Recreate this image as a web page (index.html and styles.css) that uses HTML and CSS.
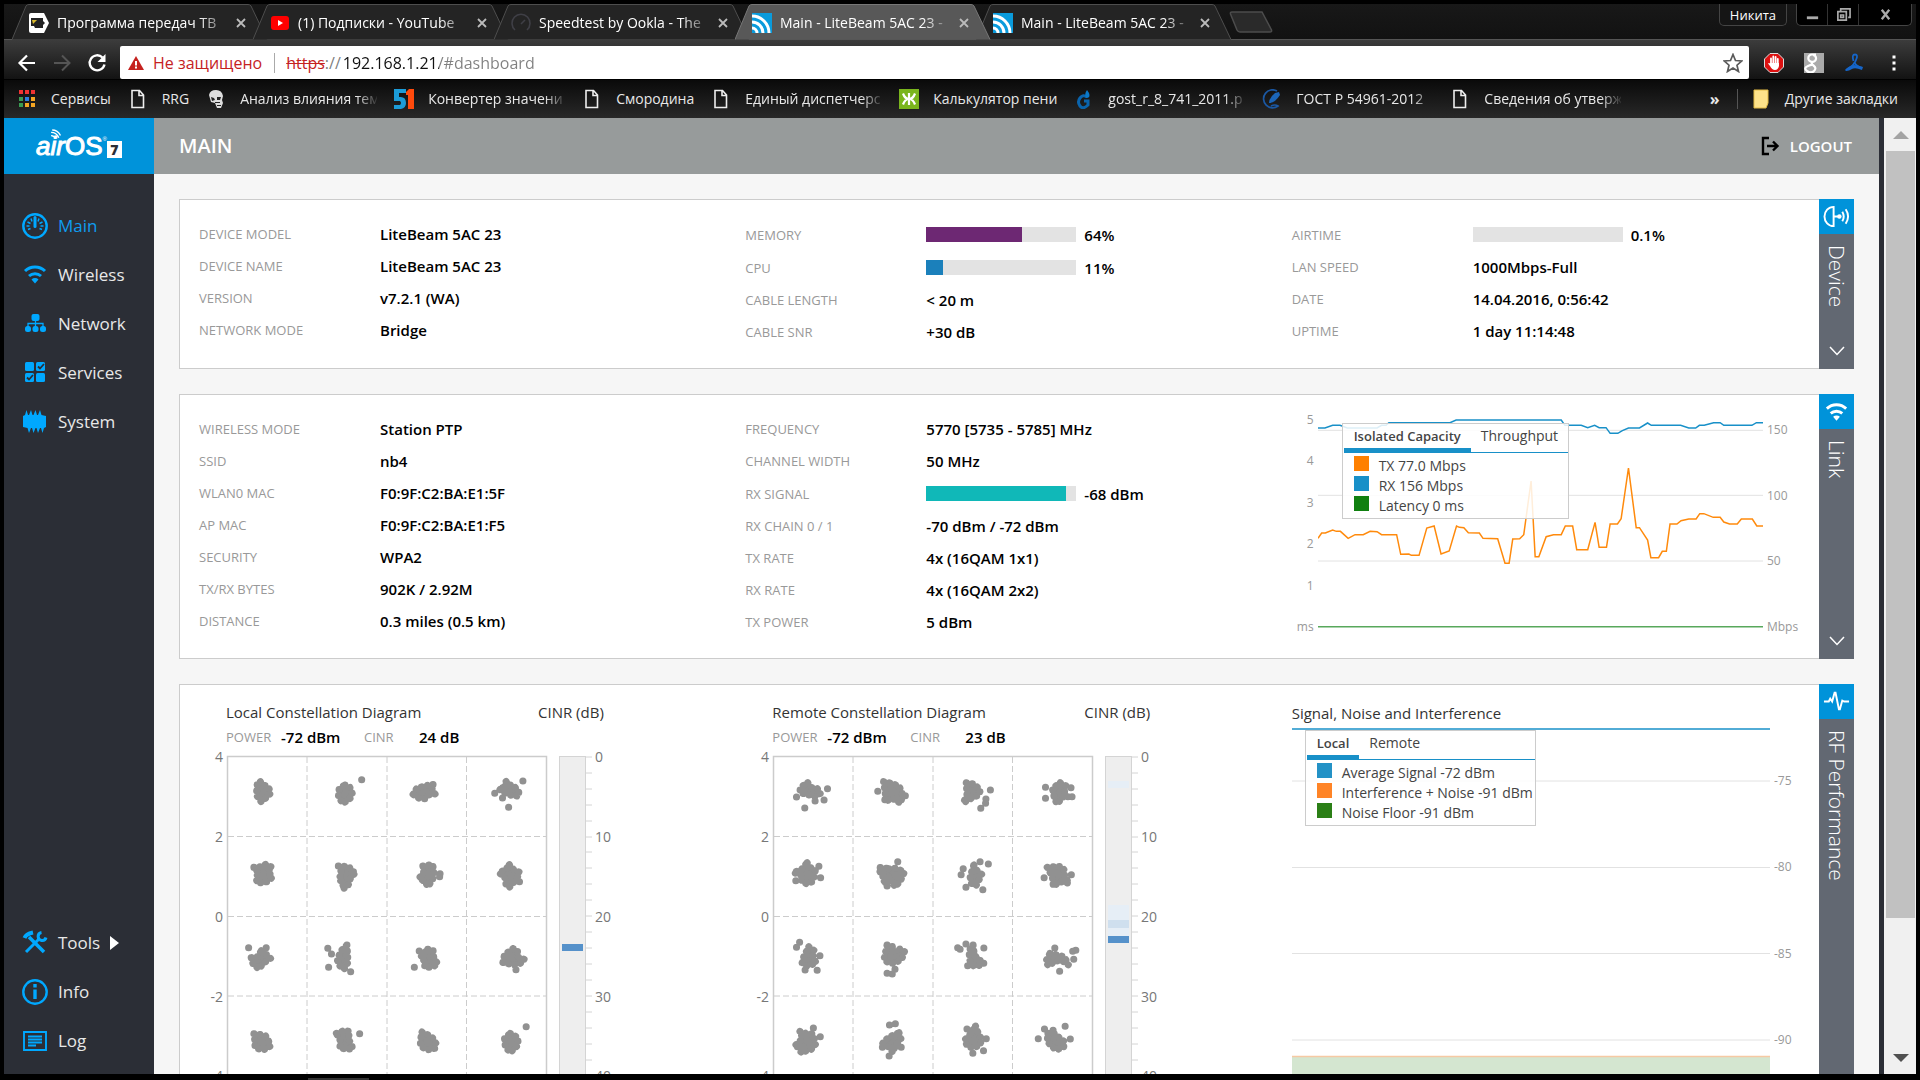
FILE: index.html
```html
<!DOCTYPE html>
<html lang="en">
<head>
<meta charset="utf-8">
<title>Main - LiteBeam 5AC 23</title>
<link rel="stylesheet" href="styles.css">
</head>
<body>
<svg class="defs" aria-hidden="true">
  <symbol id="tab-shape" viewBox="0 0 256 36" preserveAspectRatio="none"><path d="M0 35.500L14 2Q15 .5 17 .5H236Q238 .5 239 2L255 35.500" vector-effect="non-scaling-stroke"/></symbol>
  <symbol id="doc" viewBox="0 0 20 20"><path d="M4 1.500h7.500l4 4.500v12.500H4zM11 1.500v5h5" fill="none" stroke="#eee" stroke-width="1.600"/></symbol>
  <symbol id="rss" viewBox="0 0 20 20"><path fill="#0a9bdc" d="M0 0h20v20H0z"/><path d="M0 15a5 5 0 0 1 5 5M0 9a11 11 0 0 1 11 11M0 3a17 17 0 0 1 17 17" fill="none" stroke="#fff" stroke-width="3"/></symbol>
  <symbol id="close" viewBox="0 0 10 10"><path d="M1 1l8 8M9 1L1 9" stroke="#bbb" stroke-width="1.800"/></symbol>
  <symbol id="wifi" viewBox="0 0 24 20"><path d="M2 7a14.500 14.500 0 0 1 20 0M6 12a9 9 0 0 1 12 0" fill="none" stroke="currentColor" stroke-width="3"/><path fill="currentColor" d="M8.500 15.500a5 5 0 0 1 7 0L12 19.500z"/></symbol>
  <symbol id="chevron" viewBox="0 0 16 10"><path d="M1 1l7 7.500L15 1" fill="none" stroke="#fff" stroke-width="1.500"/></symbol>
</svg>

<header class="browser">
  <div class="tabstrip">
    <div class="tab">
      <svg class="tab-bg"><use href="#tab-shape"/></svg>
      <svg class="fav" viewBox="0 0 20 20"><path fill="#fff" d="M2 0h13l5 10-5 10H2Q0 20 0 18V2Q0 0 2 0z"/><path fill="#222" d="M2 5h12v3l2 2-2 2v3H6l-1-2H2z"/><path fill="#d9b92c" d="M3 7h5l-4 4z"/></svg>
      <a class="tab-title" href="#">Программа передач ТВ</a>
      <button class="tab-close" aria-label="Close"><svg><use href="#close"/></svg></button>
    </div>
    <div class="tab">
      <svg class="tab-bg"><use href="#tab-shape"/></svg>
      <svg class="fav" viewBox="0 0 20 20"><rect x="1" y="3" width="18" height="14" rx="3" fill="#f00"/><path fill="#fff" d="M8 7l5 3-5 3z"/></svg>
      <a class="tab-title" href="#">(1) Подписки - YouTube</a>
      <button class="tab-close" aria-label="Close"><svg><use href="#close"/></svg></button>
    </div>
    <div class="tab">
      <svg class="tab-bg"><use href="#tab-shape"/></svg>
      <svg class="fav" viewBox="0 0 20 20"><path d="M4 17a9 9 0 1 1 12 0M10 11l4-4" fill="none" stroke="#3f3f46" stroke-width="1.600"/></svg>
      <a class="tab-title" href="#">Speedtest by Ookla - The</a>
      <button class="tab-close" aria-label="Close"><svg><use href="#close"/></svg></button>
    </div>
    <div class="tab tab-active">
      <svg class="tab-bg"><use href="#tab-shape"/></svg>
      <svg class="fav"><use href="#rss"/></svg>
      <a class="tab-title" href="#">Main - LiteBeam 5AC 23 -</a>
      <button class="tab-close" aria-label="Close"><svg><use href="#close"/></svg></button>
    </div>
    <div class="tab">
      <svg class="tab-bg"><use href="#tab-shape"/></svg>
      <svg class="fav"><use href="#rss"/></svg>
      <a class="tab-title" href="#">Main - LiteBeam 5AC 23 -</a>
      <button class="tab-close" aria-label="Close"><svg><use href="#close"/></svg></button>
    </div>
    <button class="new-tab" aria-label="New tab"><svg viewBox="0 0 44 22"><path d="M1.500 3Q1 1 3 1H33L42.500 19Q43 21 41 21H11Q9 21 8 19z" fill="#2a2a2a" stroke="#4c4c4c" stroke-width="1.500"/></svg></button>
    <div class="window-controls">
      <button class="profile">Никита</button>
      <div class="win-group">
        <button aria-label="Minimize"><svg viewBox="0 0 16 16"><path d="M2 10h12v3H2z" fill="#aaa"/></svg></button>
        <button aria-label="Restore"><svg viewBox="0 0 16 16"><path d="M5 4V2h10v9h-2M2 5h9v9H2zM5 8.500h3v2.500H5z" fill="none" stroke="#aaa" stroke-width="1.800"/></svg></button>
        <button class="win-close" aria-label="Close window"><svg viewBox="0 0 16 16"><path d="M4 3l8 10M12 3L4 13" stroke="#aaa" stroke-width="2.500"/></svg></button>
      </div>
    </div>
  </div>

  <div class="toolbar">
    <button class="tool" aria-label="Back"><svg viewBox="0 0 20 20"><path d="M18 10H3M10 2.500L2.500 10l7.500 7.500" fill="none" stroke="#fff" stroke-width="2.200"/></svg></button>
    <button class="tool" aria-label="Forward"><svg viewBox="0 0 20 20"><path d="M2 10h15M10 2.500l7.500 7.500-7.500 7.500" fill="none" stroke="#555" stroke-width="2"/></svg></button>
    <button class="tool" aria-label="Reload"><svg viewBox="0 0 20 20"><path d="M15.500 4.500a7.500 7.500 0 1 0 2 7" fill="none" stroke="#fff" stroke-width="2.400"/><path d="M18.500 1v8h-8z" fill="#fff"/></svg></button>
    <form class="omnibox">
      <svg class="warn" viewBox="0 0 16 14"><path fill="#c5221f" d="M8 0l8 14H0z"/><path fill="#fff" d="M7 5h2v4.500H7zM7 10.500h2v2H7z"/></svg>
      <span class="insecure">Не защищено</span>
      <span class="scheme"><s>https</s>://</span>
      <input class="url" type="text" aria-label="Address" value="192.168.1.21/#dashboard">
      <svg class="star" viewBox="0 0 20 20"><path d="M10 1.500l2.500 6 6.300.5-4.800 4.200 1.500 6.300-5.500-3.400-5.500 3.400L6 12.200 1.200 8l6.300-.5z" fill="none" stroke="#5a5a5a" stroke-width="1.700"/></svg>
    </form>
    <button class="tool" aria-label="Ad blocker"><svg viewBox="0 0 20 20"><path fill="#d11" stroke="#ddd" d="M6 .5h8L19.500 6v8L14 19.500H6L.5 14V6z"/><path d="M7 11V5.500M9.300 10V3.500M11.600 10V4M13.800 11V6" stroke="#fff" stroke-width="1.800" stroke-linecap="round"/><path fill="#fff" d="M6 10h9v3q-1 4-4 4t-5-4L4 10.500q1-1 2 0z"/></svg></button>
    <button class="tool" aria-label="Google"><svg viewBox="0 0 20 20"><path fill="#aaa" d="M0 0h20v20H0z"/><path d="M12 1.500H8a3.700 3.700 0 1 0 0 7.400 3.500 3.500 0 0 0 1-7M8 9q-1 2 1.500 3.500Q13 15 10 18t-7 0 1-5 5-.5" fill="none" stroke="#fff" stroke-width="2.200"/></svg></button>
    <button class="tool" aria-label="PDF"><svg viewBox="0 0 20 20"><path d="M9.500 8Q7.500 1.500 11 1.500T12 7Q10 13 2 17M10 9q3 5 8 6" fill="none" stroke="#1565c8" stroke-width="1.800"/><path fill="#1565c8" d="M1 17q5-5 9-5t9 2l-1 3q-7-3-10-1t-6 2z"/></svg></button>
    <button class="tool" aria-label="Menu"><svg viewBox="0 0 20 20"><path d="M8.500 2.500h3v3h-3zM8.500 8.500h3v3h-3zM8.500 14.500h3v3h-3z" fill="#fff"/></svg></button>
  </div>

  <nav class="bookmarks" aria-label="Bookmarks">
    <a href="#"><svg viewBox="0 0 20 20"><path fill="#e33" d="M2 1h4v4H2zM8 1h4v4H8zM14 1h4v4h-4z"/><path fill="#3a9c52" d="M2 8h4v4H2zM2 14h4v4H2z"/><path fill="#2a7de1" d="M8 8h4v4H8z"/><path fill="#f5a623" d="M14 8h4v4h-4zM8 14h4v4H8zM14 14h4v4h-4z"/></svg><span>Сервисы</span></a>
    <a href="#"><svg><use href="#doc"/></svg><span>RRG</span></a>
    <a href="#"><svg viewBox="0 0 20 20"><path fill="#ddd" d="M3 6Q4 1 10 1t7 6l-1 4 1 3-2 5h-4l-2-5-4-1z"/><path fill="#222" d="M5 8l3 1 1 2-3 1zM11 8l4 0-1 3h-3zM9 13h5v1H9zM11 16h4v1h-4z"/></svg><span class="cut">Анализ влияния тем</span></a>
    <a href="#"><svg viewBox="0 0 20 20"><path fill="#1c9cd8" d="M0 0h12v4H5v4q7-1 7 6 0 5-5 6H0v-4h6q2-2 0-4H0z"/><path fill="#ff4a0c" d="M12 3l3-3h5v20h-6V6h-2z"/></svg><span class="cut">Конвертер значени</span></a>
    <a href="#"><svg><use href="#doc"/></svg><span>Смородина</span></a>
    <a href="#"><svg><use href="#doc"/></svg><span class="cut">Единый диспетчерс</span></a>
    <a href="#"><svg viewBox="0 0 20 20"><path fill="#7ab51d" d="M0 0h20v20H0z"/><path d="M10 4v12M4 4.500q2 5.500 6 5.500t6-5.500M4 15.500Q6 10 10 10t6 5.500" fill="none" stroke="#fff" stroke-width="2.200"/></svg><span>Калькулятор пени</span></a>
    <a href="#"><svg viewBox="0 0 20 20"><path d="M13 8q-4-3-7 1t0 8 8-1v-4h-4" fill="none" stroke="#0a64ad" stroke-width="3"/><path fill="#0a78c8" d="M13 1q-3 4-1 8 5 0 3-5z"/></svg><span class="cut">gost_r_8_741_2011.p</span></a>
    <a href="#"><svg viewBox="0 0 20 20"><path d="M15 2A9 9 0 1 0 16 17q-3-2-7 0" fill="none" stroke="#1b58a3" stroke-width="1.700"/><path fill="#1b65b8" d="M7 14q0-5 6-10l4-1 1 3q-5 8-11 8z"/></svg><span class="cut">ГОСТ Р 54961-2012</span></a>
    <a href="#"><svg><use href="#doc"/></svg><span class="cut">Сведения об утверж</span></a>
    <button class="more">»</button>
    <a class="other" href="#"><svg viewBox="0 0 20 20"><path fill="#fde28a" stroke="#e3bb45" d="M3 1h14v13l-2 5H3z"/></svg><span>Другие закладки</span></a>
  </nav>
</header>

<div class="app">
  <aside class="sidebar">
    <a class="logo" href="#"><svg class="waves" viewBox="0 0 10 9"><path d="M1 6q3 0 4 3M1 3q5 0 7 5M2 .8q5 0 7.500 5" fill="none" stroke="#fff" stroke-width="1.300"/></svg><i>air</i><span>OS</span><sup>®</sup><b>7</b></a>
    <nav class="menu">
      <a class="current" href="#"><svg viewBox="0 0 26 26"><circle cx="13" cy="13" r="11.700" fill="none" stroke="currentColor" stroke-width="2.400"/><path d="M13 4.500v9" stroke="currentColor" stroke-width="3" stroke-linecap="round"/><path d="M9 5.500l1 3M17 5.500l-1 3M5.500 9l3 1.500M20.500 9l-3 1.500M4.500 13h3M21.500 13h-3M6 16.500l2.500-1M20 16.500l-2.500-1" stroke="currentColor" stroke-width="1.500"/></svg>Main</a>
      <a href="#"><svg viewBox="0 0 26 26"><use href="#wifi" x="1" y="2" width="24" height="20"/></svg>Wireless</a>
      <a href="#"><svg viewBox="0 0 26 26"><g fill="currentColor"><rect x="9.500" y="3" width="8" height="7" rx="2"/><rect x="3" y="15" width="6" height="6" rx="2.500"/><rect x="10.500" y="15" width="6" height="6" rx="2.500"/><rect x="18" y="15" width="6" height="6" rx="2.500"/></g><path d="M13.500 9v8M6 17v-4.500h15V17" fill="none" stroke="currentColor" stroke-width="1.300"/></svg>Network</a>
      <a href="#"><svg viewBox="0 0 26 26"><g fill="currentColor"><rect x="3" y="2" width="9" height="9" rx="1.500"/><rect x="14" y="2" width="9" height="9" rx="1.500"/><rect x="3" y="13" width="9" height="9" rx="1.500"/><rect x="14" y="13" width="9" height="9" rx="1.500"/></g><path d="M16 6.500l2 2 4-4.500M5 17.500l2 2 4-4.500" fill="none" stroke="#2b2e36" stroke-width="1.800"/></svg>Services</a>
      <a href="#"><svg viewBox="0 0 26 26"><path fill="currentColor" d="M1 7l2-1 1.500-5L6 6h1l2-5 1.500 5h1l2-5 1.500 5h1l2-5 1.500 5L24 7v11l-2 1-1.500 5-1.500-5h-1l-2 5-1.500-5h-1l-2 5-1.500-5h-1l-2 5-1.500-5L1 18z"/></svg>System</a>
    </nav>
    <nav class="menu menu-bottom">
      <a href="#"><svg viewBox="0 0 26 26"><path d="M7 7l15 15" stroke="currentColor" stroke-width="3.500"/><path d="M2.500 8Q4 4 11 2.500" fill="none" stroke="currentColor" stroke-width="4"/><path d="M4 22L17 9" stroke="currentColor" stroke-width="3"/><path d="M19.500 2.500a4 4 0 1 0 4.500 5" fill="none" stroke="currentColor" stroke-width="3"/></svg>Tools<span class="caret"></span></a>
      <a href="#"><svg viewBox="0 0 26 26"><circle cx="13" cy="13" r="11.700" fill="none" stroke="currentColor" stroke-width="2.400"/><path fill="currentColor" d="M11.300 5h3.400v3.500h-3.400zM11.300 10.500h3.400V20h-3.400z"/></svg>Info</a>
      <a href="#"><svg viewBox="0 0 26 26"><path d="M2 4h22v18H2zM6 8.500h14M6 11.500h14M6 14.500h14M6 17.500h8" fill="none" stroke="currentColor" stroke-width="1.900"/></svg>Log</a>
    </nav>
  </aside>

  <div class="page">
    <header class="page-head">
      <h1>MAIN</h1>
      <button class="logout"><svg viewBox="0 0 20 20"><path d="M9 2H3v16h6M7 10h10M13 5.500l4.500 4.500-4.500 4.500" fill="none" stroke="#000" stroke-width="2.400"/></svg>LOGOUT</button>
    </header>

    <main class="content">
      <section class="panel">
        <div class="cols">
          <dl>
            <div><dt>DEVICE MODEL</dt><dd>LiteBeam 5AC 23</dd></div>
            <div><dt>DEVICE NAME</dt><dd>LiteBeam 5AC 23</dd></div>
            <div><dt>VERSION</dt><dd>v7.2.1 (WA)</dd></div>
            <div><dt>NETWORK MODE</dt><dd>Bridge</dd></div>
          </dl>
          <dl>
            <div class="has-bar"><dt>MEMORY</dt><dd><span class="bar"><span class="fill memory" style="width:64%"></span></span>64%</dd></div>
            <div class="has-bar"><dt>CPU</dt><dd><span class="bar"><span class="fill cpu" style="width:11%"></span></span>11%</dd></div>
            <div><dt>CABLE LENGTH</dt><dd>&lt; 20 m</dd></div>
            <div><dt>CABLE SNR</dt><dd>+30 dB</dd></div>
          </dl>
          <dl>
            <div class="has-bar"><dt>AIRTIME</dt><dd><span class="bar"></span>0.1%</dd></div>
            <div><dt>LAN SPEED</dt><dd>1000Mbps-Full</dd></div>
            <div><dt>DATE</dt><dd>14.04.2016, 0:56:42</dd></div>
            <div><dt>UPTIME</dt><dd>1 day 11:14:48</dd></div>
          </dl>
        </div>
        <button class="side"><span class="side-icon"><svg viewBox="0 0 28 28"><path d="M11 4A9 9.500 0 0 0 11 24zM11 14h6" fill="none" stroke="#fff" stroke-width="2"/><circle cx="17" cy="14" r="2.300" fill="#fff"/><path d="M20 9q3 5 0 10M23.500 6.500q5 7.500 0 15" fill="none" stroke="#fff" stroke-width="2"/></svg></span><span class="side-name">Device</span><svg class="chev"><use href="#chevron"/></svg></button>
      </section>

      <section class="panel">
        <div class="cols">
          <dl>
            <div><dt>WIRELESS MODE</dt><dd>Station PTP</dd></div>
            <div><dt>SSID</dt><dd>nb4</dd></div>
            <div><dt>WLAN0 MAC</dt><dd>F0:9F:C2:BA:E1:5F</dd></div>
            <div><dt>AP MAC</dt><dd>F0:9F:C2:BA:E1:F5</dd></div>
            <div><dt>SECURITY</dt><dd>WPA2</dd></div>
            <div><dt>TX/RX BYTES</dt><dd>902K / 2.92M</dd></div>
            <div><dt>DISTANCE</dt><dd>0.3 miles (0.5 km)</dd></div>
          </dl>
          <dl>
            <div><dt>FREQUENCY</dt><dd>5770 [5735 - 5785] MHz</dd></div>
            <div><dt>CHANNEL WIDTH</dt><dd>50 MHz</dd></div>
            <div class="has-bar"><dt>RX SIGNAL</dt><dd><span class="bar"><span class="fill signal" style="width:93%"></span></span>-68 dBm</dd></div>
            <div><dt>RX CHAIN 0 / 1</dt><dd>-70 dBm / -72 dBm</dd></div>
            <div><dt>TX RATE</dt><dd>4x (16QAM 1x1)</dd></div>
            <div><dt>RX RATE</dt><dd>4x (16QAM 2x2)</dd></div>
            <div><dt>TX POWER</dt><dd>5 dBm</dd></div>
          </dl>
          <div class="link-chart">
            <div class="axis axis-ms"><span>5</span><span>4</span><span>3</span><span>2</span><span>1</span><span>ms</span></div>
            <svg viewBox="91 645 1093 720" preserveAspectRatio="none">
              <g class="grid"><path d="M91 751H1184M91 946H1184M91 1143H1184"/></g>
              <path class="line latency" d="M91 1340H1184"/>
              <path class="line rx" d="M91 744 108 744 127 736 145 736 163 744 236 744 247 736 258 736 265 728 415 728 430 720 688 720 697 736 737 736 753 743 770 736 781 743 798 743 808 760 827 760 838 752 853 744 880 744 900 729 909 736 981 736 1001 744 1018 744 1027 736 1039 736 1062 728 1078 728 1087 736 1156 736 1167 728 1184 728"/>
              <path class="line tx" d="M91 1075 100 1059 109 1059 127 1050 136 1054 146 1054 165 1075 182 1064 202 1064 219 1054 236 1055 247 1064 284 1064 294 1123 314 1122 320 1126 339 1126 358 1044 376 1038 393 1122 413 1113 431 1038 438 1042 449 1043 460 1058 487 1059 496 1075 532 1076 550 1150 560 1150 569 1077 586 1076 596 1064 614 903 624 1130 633 1130 651 1070 669 1064 688 1064 698 1038 716 1038 726 1109 753 1109 771 1027 781 1102 799 1102 808 1032 826 1032 835 1016 853 864 872 1043 880 1043 900 1080 908 1133 927 1133 936 1114 946 1114 955 1032 972 1032 982 1022 1001 1017 1019 1017 1028 1001 1038 1001 1061 1012 1078 1012 1087 1026 1101 1032 1120 1032 1130 1017 1157 1017 1168 1038 1184 1038"/>
            </svg>
            <div class="axis axis-mbps"><span>150</span><span>100</span><span>50</span><span>Mbps</span></div>
            <div class="legend legend-link">
              <div class="legend-tabs"><button class="on">Isolated Capacity</button><button>Throughput</button></div>
              <ul><li><i class="sw-tx"></i>TX 77.0 Mbps</li><li><i class="sw-rx"></i>RX 156 Mbps</li><li><i class="sw-lat"></i>Latency 0 ms</li></ul>
            </div>
          </div>
        </div>
        <button class="side"><span class="side-icon"><svg viewBox="0 0 28 28"><use href="#wifi" x="2" y="4" width="24" height="20"/></svg></span><span class="side-name">Link</span><svg class="chev"><use href="#chevron"/></svg></button>
      </section>

      <section class="panel panel-rf">
        <div class="cols">
          <div class="constellation">
            <div class="c-head"><h2>Local Constellation Diagram</h2><h2>CINR (dB)</h2></div>
            <div class="c-stats"><span>POWER</span><b>-72 dBm</b><span>CINR</span><b>24 dB</b></div>
            <svg class="plot" viewBox="0 0 430 340">
              <g class="frame"><path d="M27.500 8.500H346.500V328H27.500z"/><path class="dash" d="M107 9V328M187 9V328M266.500 9V328M28 88.500H346M28 168.500H346M28 248H346"/></g>
              <rect class="gauge" x="359.500" y="8.500" width="26" height="340"/>
              <path class="ticks" d="M386 9h6M386 25h6M386 41h6M386 57h6M386 73h6M386 89h6M386 104h6M386 120h6M386 136h6M386 152h6M386 168h6M386 184h6M386 200h6M386 216h6M386 232h6M386 248h6M386 264h6M386 280h6M386 296h6M386 312h6M386 328h6"/>
              <rect class="mark" x="362" y="196" width="21" height="7"/>
              <g class="axis-l"><text x="23" y="14">4</text><text x="23" y="94">2</text><text x="23" y="174">0</text><text x="23" y="254">-2</text><text x="23" y="333">-4</text></g>
              <g class="axis-r"><text x="395" y="14">0</text><text x="395" y="94">10</text><text x="395" y="174">20</text><text x="395" y="254">30</text><text x="395" y="333">40</text></g>
              <g class="points" transform="translate(-200 -68) scale(.40816 .33333)">
                <path d="M638 305 646 316 656 318 664 338 655 350 640 366 628 345 630 314zM845 315 856 318 863 340 861 352 840 371 829 350 831 325zM886 299h1M1012 343 1022 323 1045 318 1050 313 1064 314 1058 325 1066 342 1050 345 1042 356 1028 356zM1240 304 1246 315 1257 315 1271 335 1271 349 1252 346 1238 340 1222 326 1240 320zM1281 303h1M1212 340h1M1231 354h1M1246 382h1"/>
                <path d="M622 562 640 560 652 552 668 563 655 572 668 591 655 605 630 610 627 590 635 580zM829 558 856 560 860 574 873 577 860 590 852 620 838 627 842 608 829 598 838 580zM1036 558 1060 553 1063 575 1060 600 1048 620 1042 605 1026 595 1038 580zM1078 581h1M1077 590h1M1248 554 1258 568 1274 577 1268 590 1274 605 1260 605 1248 622 1240 618 1238 595 1222 577 1238 570z"/>
                <path d="M609 803h1M652 803h1M640 812 655 825 663 835 645 850 634 867 620 852 615 833 632 830zM803 805h1M812 822h1M805 862h1M859 875h1M850 795 852 830 852 848 843 868 830 855 826 838 836 812zM1027 813h1M1015 862h1M1048 808 1061 810 1063 835 1073 852 1058 862 1040 862 1042 845 1030 832zM1257 806 1268 810 1268 830 1285 838 1275 850 1258 855 1232 848 1236 824zM1264 869h1"/>
                <path d="M622 1061 650 1066 657 1080 663 1098 645 1110 625 1104 624 1080zM824 1060 842 1052 857 1054 853 1078 861 1090 864 1108 832 1105 835 1085zM881 1061h1M1034 1056 1058 1070 1069 1092 1066 1105 1046 1110 1030 1098 1030 1080zM1250 1060 1268 1072 1270 1094 1250 1118 1238 1100 1236 1075zM1289 1040h1"/>
              </g>
            </svg>
          </div>

          <div class="constellation">
            <div class="c-head"><h2>Remote Constellation Diagram</h2><h2>CINR (dB)</h2></div>
            <div class="c-stats"><span>POWER</span><b>-72 dBm</b><span>CINR</span><b>23 dB</b></div>
            <svg class="plot" viewBox="0 0 430 340">
              <g class="frame"><path d="M27.500 8.500H346.500V328H27.500z"/><path class="dash" d="M107 9V328M187 9V328M266.500 9V328M28 88.500H346M28 168.500H346M28 248H346"/></g>
              <rect class="gauge" x="359.500" y="8.500" width="26" height="340"/>
              <path class="ticks" d="M386 9h6M386 25h6M386 41h6M386 57h6M386 73h6M386 89h6M386 104h6M386 120h6M386 136h6M386 152h6M386 168h6M386 184h6M386 200h6M386 216h6M386 232h6M386 248h6M386 264h6M386 280h6M386 296h6M386 312h6M386 328h6"/>
              <path fill="#e6eef6" d="M362 33h21v7h-21zM362 157h21v31h-21z"/><path fill="#cfdfee" d="M362 172h21v8h-21z"/>
              <rect class="mark" x="362" y="188" width="21" height="7"/>
              <g class="axis-l"><text x="23" y="14">4</text><text x="23" y="94">2</text><text x="23" y="174">0</text><text x="23" y="254">-2</text><text x="23" y="333">-4</text></g>
              <g class="axis-r"><text x="395" y="14">0</text><text x="395" y="94">10</text><text x="395" y="174">20</text><text x="395" y="254">30</text><text x="395" y="333">40</text></g>
              <g class="points" transform="translate(-46.670 -68) scale(.34440 .33333)">
                <path d="M315 308 325 322 342 325 352 340 338 350 318 345 292 338 293 322zM372 326h1M282 351h1M336 363h1M362 360h1M306 384h1M535 305 558 310 580 318 590 342 585 370 560 355 538 366 540 342zM518 334h1M598 347h1M775 308 797 312 816 330 812 345 790 355 766 369 777 345zM845 330h1M832 357h1M831 370h1M817 385h1M1048 308 1064 317 1060 330 1062 345 1038 372 1030 350 1025 325zM1079 323h1M1082 350h1M1070 350h1M1005 322h1M1005 355h1"/>
                <path d="M313 548 322 562 337 570 334 590 328 605 312 612 296 603 300 588 272 577 295 570zM347 559h1M352 593h1M280 602h1M550 566 570 565 596 575 585 600 569 621 555 600 531 610 550 590 528 588 521 562zM545 618h1M576 545h1M797 555 805 570 820 583 812 600 803 618 790 610 786 590zM815 545h1M839 552h1M766 566h1M760 584h1M774 622h1M823 629h1M1010 562 1036 559 1054 560 1062 575 1060 590 1075 610 1045 605 1028 620 1025 590zM1080 584h1M1001 593h1"/>
                <path d="M318 800 334 812 330 830 340 850 312 858 298 850 303 830zM291 787h1M282 802h1M350 827h1M342 871h1M307 870h1M545 795 560 797 563 815 585 806 596 814 588 837 568 850 550 850 536 838zM568 868h1M545 880h1M560 882h1M750 803h1M757 808h1M774 792h1M826 804h1M795 795 798 820 808 840 826 843 826 853 798 860 785 840 783 812zM779 857h1M1018 820 1040 825 1060 830 1072 855 1050 840 1030 845 1015 858 1005 846zM1032 804h1M1084 814h1M1093 811h1M1087 838h1M1046 874h1"/>
                <path d="M292 1054 310 1060 330 1062 338 1092 325 1108 294 1118 303 1100 275 1100 300 1075zM331 1044h1M351 1070h1M580 1058 586 1078 570 1095 562 1118 550 1100 527 1102 535 1085 552 1070zM552 1035h1M569 1031h1M586 1102h1M551 1128h1M802 1038 810 1060 820 1078 815 1095 795 1105 778 1098 770 1080 785 1065zM777 1047h1M833 1076h1M825 1112h1M794 1120h1M1012 1060 1030 1060 1060 1085 1058 1102 1035 1110 1010 1085zM1002 1047h1M1027 1051h1M1062 1039h1M1077 1077h1M984 1076h1"/>
              </g>
            </svg>
          </div>

          <div class="noise">
            <h2>Signal, Noise and Interference</h2>
            <div class="noise-chart">
              <svg viewBox="0 0 478 350" preserveAspectRatio="none">
                <g class="grid"><path d="M0 53H478M0 139.500H478M0 225.500H478M0 312H478"/></g>
                <path fill="#d4e6d0" d="M0 329H478V350H0z"/><path class="line floor" d="M0 328.500H478"/>
                <path class="line rx" d="M0 1H478"/>
              </svg>
              <div class="axis axis-db"><span>-75</span><span>-80</span><span>-85</span><span>-90</span></div>
              <div class="legend legend-rf">
                <div class="legend-tabs"><button class="on">Local</button><button>Remote</button></div>
                <ul><li><i class="sw-sig"></i>Average Signal -72 dBm</li><li><i class="sw-int"></i>Interference + Noise -91 dBm</li><li><i class="sw-floor"></i>Noise Floor -91 dBm</li></ul>
              </div>
            </div>
          </div>
        </div>
        <button class="side"><span class="side-icon"><svg viewBox="0 0 28 28"><path d="M1 14h5l1.500-3 2 3L12 5h1l3.500 17h1L20 13l2 1h5" fill="none" stroke="#fff" stroke-width="2"/></svg></span><span class="side-name">RF Performance</span></button>
      </section>
    </main>
  </div>

  <div class="scrollbar" aria-hidden="true"><span class="arrow up"></span><span class="thumb"></span><span class="arrow down"></span></div>
</div>
<div class="desk-edge"></div>
</body>
</html>
```

FILE: styles.css
```css
* { box-sizing: border-box; }
body { margin: 0; height: 100vh; padding: 4px 4px 0; background: #000; display: flex; flex-direction: column; overflow: hidden; font: 14px/20px "Open Sans", "Noto Sans", sans-serif; color: #444; }
button { border: 0; padding: 0; background: none; font: inherit; color: inherit; display: flex; align-items: center; }
a { color: inherit; text-decoration: none; }
h1, h2, dl, dd, ul { margin: 0; padding: 0; font-weight: 400; }
svg { flex: none; }
.defs { position: absolute; width: 0; height: 0; }

/* browser frame */
.browser { flex: none; color: #fff; }
.tabstrip { height: 36px; display: flex; padding-left: 8px; background: linear-gradient(#181818, #121212); border-bottom: 1px solid #555; }
.tab { position: relative; width: 256px; margin-right: -15px; padding: 2px 22px 0 17px; display: flex; align-items: center; gap: 8px; }
.tab-bg { position: absolute; left: 0; top: 0; width: 100%; height: 36px; fill: #242424; stroke: #4e4e4e; }
.tab-active { z-index: 1; }
.tab-active .tab-bg { fill: #585858; stroke: #777; }
.fav { position: relative; width: 20px; height: 20px; }
.tab-title { position: relative; flex: 1; min-width: 0; white-space: nowrap; mask-image: linear-gradient(to right, #000 85%, rgba(0, 0, 0, .2)); }
.tab-close { position: relative; margin-left: 4px; }
.tab-close svg { width: 10px; height: 10px; }
.new-tab { margin-left: 12px; align-self: center; }
.new-tab svg { width: 44px; height: 22px; }
.window-controls { margin-left: auto; margin-right: 4px; display: flex; gap: 9px; height: 22px; font-size: 13px; }
.profile, .win-group { border: 1px solid #444; border-top: 0; border-radius: 0 0 5px 5px; }
.profile { padding: 0 10px; background: #151515; }
.win-group { display: flex; background: #000; }
.win-group button { width: 31px; justify-content: center; border-right: 1px solid #333; }
.win-group .win-close { width: 52px; border: 0; }
.win-group svg { width: 15px; height: 15px; }
.toolbar { height: 40px; display: flex; align-items: center; padding: 6px 12px 0 13px; gap: 15px; background: linear-gradient(#3c3c3c, #131313); border-bottom: 1px solid #000; }
.tool svg { width: 20px; height: 20px; }
.tool:nth-last-child(-n+4) { margin-left: 5px; }
.omnibox { flex: 1; height: 33px; background: #fff; border-radius: 2px; display: flex; align-items: center; padding: 0 6px 0 8px; margin-left: -2px; font-size: 16px; color: #808080; }
.omnibox + .tool { margin-left: 0; }
.warn { width: 16px; height: 14px; margin-right: 9px; }
.insecure { color: #c5221f; padding-right: 12px; border-right: 1px solid #aaa; margin-right: 11px; }
.scheme { margin-right: 2px; }
.scheme s { color: #c5221f; }
.url { flex: 1; border: 0; padding: 0; outline: 0; font: inherit; color: transparent; background: linear-gradient(to right, #111 96px, #808080 96px); background-clip: text; -webkit-background-clip: text; }
.star { width: 20px; height: 20px; }
.bookmarks { height: 38px; display: flex; align-items: center; padding: 0 18px 0 13px; gap: 17px; background: linear-gradient(#0a0a0a, #282828); color: #e8e8e8; white-space: nowrap; }
.bookmarks a { display: flex; align-items: center; gap: 14px; }
.bookmarks svg { width: 20px; height: 20px; }
.cut { width: 137px; mask-image: linear-gradient(to right, #000 85%, rgba(0, 0, 0, .1)); }
.more { margin-left: auto; font-weight: 700; font-size: 16px; }
.other { padding-left: 13px; border-left: 1px solid #555; }

/* application */
.app { flex: 1; min-height: 0; display: flex; overflow: hidden; background: #2b2e36; }
.sidebar { flex: none; width: 150px; display: flex; flex-direction: column; color: #e8e8e8; }
.logo { position: relative; height: 56px; background: #0093da; color: #fff; display: flex; align-items: center; justify-content: center; font: 26px/56px "Liberation Sans", sans-serif; -webkit-text-stroke: 1px #fff; }
.waves { position: absolute; left: 46px; top: 11px; width: 11px; height: 10px; }
.logo sup { font-size: 6px; line-height: 8px; align-self: flex-start; margin-top: 17px; -webkit-text-stroke: 0; }
.logo b { background: #fff; color: #2b2e36; font: 800 14px/17px "Open Sans", sans-serif; width: 15px; text-align: center; margin-top: 6px; -webkit-text-stroke: 0; }
.menu { padding-top: 27px; font-size: 17px; }
.menu a { height: 49px; display: flex; align-items: center; gap: 10px; padding-left: 18px; }
.menu svg { width: 26px; height: 26px; color: #00a8ff; }
.menu .current { color: #0f9cf0; }
.menu-bottom { margin-top: auto; padding: 0 0 9px; }
.caret { border: 7px solid transparent; border-left: 9px solid #fff; border-right: 0; }
.page { flex: 1; min-width: 0; background: #f6f6f6; display: flex; flex-direction: column; margin-right: 5px; }
.page-head { flex: none; height: 56px; background: #979b9b; color: #fff; display: flex; align-items: center; justify-content: space-between; padding: 0 27px 0 25px; }
h1 { font-size: 20px; font-weight: 600; }
.logout { font-size: 15px; font-weight: 600; gap: 10px; }
.logout svg { width: 20px; height: 20px; }
.content { padding: 25px; display: flex; flex-direction: column; gap: 25px; }
.panel { flex: none; display: flex; background: #fff; }
.cols { flex: 1; min-width: 0; display: grid; grid-template-columns: repeat(3, minmax(0, 1fr)); border: 1px solid #ccc; border-right: 0; }
dl { padding: 18px 0 20px 19px; }
dl > div { display: flex; align-items: center; height: 32px; }
dl > .has-bar { height: 33px; }
dt { width: 181px; font-size: 13px; color: #999; }
dd { display: flex; align-items: center; font-size: 15px; font-weight: 600; color: #000; white-space: nowrap; }
.bar { width: 150px; height: 15px; background: #e3e3e3; margin-right: 8px; }
.fill { display: block; height: 100%; }
.memory { background: #6d2873; }
.cpu { background: #1b80bb; }
.signal { background: #10b8b8; }
.side { flex: none; width: 35px; background: #626872; color: #fff; flex-direction: column; }
.side-icon { width: 35px; height: 35px; background: #0093da; display: grid; place-items: center; }
.side-icon svg { width: 27px; height: 27px; }
.side-name { writing-mode: vertical-rl; font-size: 21px; font-weight: 300; line-height: 35px; margin: 11px 0 auto; }
.chev { width: 16px; height: 10px; margin-bottom: 13px; }

/* charts */
.axis { display: flex; flex: none; flex-direction: column; justify-content: space-between; font-size: 12px; color: #999; }
.grid path { stroke: #e2e2e2; fill: none; vector-effect: non-scaling-stroke; }
.line { fill: none; stroke-width: 1.500px; vector-effect: non-scaling-stroke; }
.tx { stroke: #ff8a0c; }
.rx { stroke: #1890c8; }
.latency { stroke: #58a85c; }
.floor { stroke: #f6c9a4; }
.link-chart { position: relative; display: flex; padding-right: 20px; }
.link-chart > svg { flex: 1; min-width: 0; height: 240px; }
.axis-ms { width: 45px; padding: 15px 4px 0 0; height: 242px; text-align: right; }
.axis-mbps { width: 36px; padding: 25px 0 0 4px; height: 242px; }
.legend { position: absolute; border: 1px solid #ccc; background: rgba(255, 255, 255, .85); padding-left: 1px; }
.legend-link { left: 69px; top: 28px; }
.legend-rf { left: 13px; top: 7px; }
.legend-tabs { display: flex; border-bottom: 1px solid #1890c8; height: 29px; }
.legend-tabs button { padding: 0 10px; border-bottom: 4px solid transparent; }
.legend-tabs .on { font-size: 13px; font-weight: 600; border-color: #1890c8; }
.legend ul { list-style: none; padding: 3px 2px 2px 10px; }
.legend li { display: flex; align-items: center; gap: 10px; height: 20px; white-space: nowrap; }
.legend i { width: 15px; height: 15px; margin-bottom: 5px; }
.sw-tx { background: #ff8000; }
.sw-rx { background: #1890c8; }
.sw-lat { background: #108010; }
.sw-sig { background: #2492c6; }
.sw-int { background: #ff8426; }
.sw-floor { background: #2b7f16; }
.constellation { padding: 17px 0 0 20px; }
.c-head { display: flex; padding-left: 26px; }
h2 { flex: none; font-size: 15px; line-height: 20px; font-weight: 500; width: 312px; white-space: nowrap; color: #333; }
.c-head h2:last-child { width: auto; }
.c-stats { display: flex; padding: 5px 0 1px 26px; }
.c-stats span { width: 55px; font-size: 13px; color: #999; }
.c-stats b { width: 83px; font-size: 15px; font-weight: 600; color: #000; }
.plot { display: block; width: 430px; height: 340px; }
.frame path { fill: none; stroke: #ccc; stroke-width: 1.500px; }
.frame .dash { stroke-width: 1px; stroke-dasharray: 6 3; }
.gauge { fill: #eee; stroke: #d4d4d4; }
.ticks { stroke: #d4d4d4; }
.mark { fill: #5591ca; }
.plot text { font-size: 14px; fill: #777; }
.axis-l { text-anchor: end; }
.points path { fill: #919191; stroke: #919191; stroke-width: 7px; stroke-dasharray: .1 6; stroke-linecap: round; stroke-linejoin: round; vector-effect: non-scaling-stroke; }
.noise { padding: 18px 0 0 19px; min-width: 0; }
.noise-chart { position: relative; display: flex; padding-top: 5px; }
.noise-chart > svg { flex: 1; min-width: 0; height: 350px; }
.axis-db { width: 49px; height: 322px; padding: 43px 0 0 4px; }

.scrollbar { flex: none; width: 32px; padding: 0 1px 0 2px; background: #f0f0f0; display: flex; flex-direction: column; align-items: center; justify-content: space-between; }
.thumb { width: 100%; height: 80.200%; margin-bottom: auto; background: #c1c1c1; }
.arrow { border: 8px solid transparent; }
.up { border-bottom-color: #a3a3a3; border-top: 0; margin: 13px 0 12px; }
.down { border-top-color: #505050; border-bottom: 0; margin-bottom: 12px; }
.desk-edge { flex: none; height: 6px; border-top: 4px solid #000; width: 61px; margin-left: 304px; background: #333; }
```
